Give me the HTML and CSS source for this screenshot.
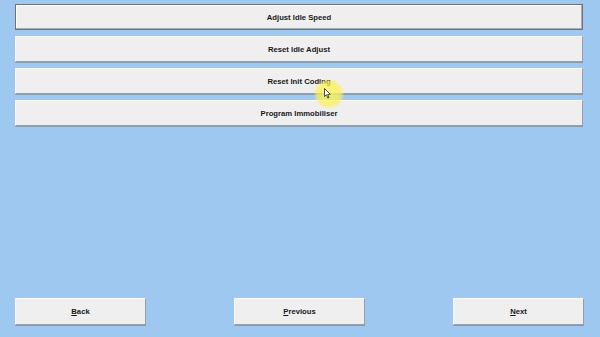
FILE: index.html
```html
<!DOCTYPE html>
<html lang="en">
<head>
  <meta charset="utf-8">
  <title>Functions</title>
  <link rel="stylesheet" href="styles.css">
</head>
<body>
<div class="screen">
  <div class="menu">
    <button class="btn focused">Adjust Idle Speed</button>
    <button class="btn">Reset Idle Adjust</button>
    <button class="btn">Reset Init Coding</button>
    <button class="btn">Program Immobiliser</button>
  </div>
  <div class="nav">
    <button class="btn small"><u>B</u>ack</button>
    <button class="btn small"><u>P</u>revious</button>
    <button class="btn small"><u>N</u>ext</button>
  </div>
</div>
<div class="cursor-glow">
  <svg class="pointer" width="7" height="11" viewBox="0 0 7 11">
    <path d="M0.5 0.5 L0.5 8.5 L2.4 6.8 L3.8 10 L5 9.5 L3.7 6.4 L6.3 6.3 Z" fill="#fff" stroke="#222" stroke-width="0.8"/>
  </svg>
</div>
</body>
</html>
```

FILE: styles.css
```css
* {
  margin: 0;
  padding: 0;
  box-sizing: border-box;
}

html, body {
  width: 100%;
  height: 100%;
  overflow: hidden;
}

body {
  background-color: #9fc8f0;
  font-family: "Liberation Sans", Arial, sans-serif;
}

.screen {
  height: 100%;
  display: flex;
  flex-direction: column;
  padding: 4px 16px 12px 15px;
}

.menu {
  display: flex;
  flex-direction: column;
  gap: 6px;
  margin-right: 1px;
}

.btn {
  height: 26px;
  background-color: #efefef;
  border: 1px solid;
  border-color: #fafafa #9a9ea4 #9a9ea4 #fafafa;
  box-shadow: 0 1px 0 #8f9aa8;
  font-family: inherit;
  font-size: 7.7px;
  font-weight: bold;
  color: #1a1a1a;
  text-align: center;
}

.btn.focused {
  border: 1px solid #6f737a;
  box-shadow: inset -1px -1px 0 #a8acb2, inset 1px 1px 0 #fff;
}

.nav {
  margin-top: auto;
  display: flex;
  justify-content: space-between;
}

.btn.small {
  width: 131px;
  height: 27px;
}

.btn u {
  text-decoration: underline;
}

.cursor-glow {
  position: absolute;
  left: 314px;
  top: 79px;
  width: 30px;
  height: 30px;
  border-radius: 50%;
  background: radial-gradient(circle, rgba(255, 245, 90, 0.85) 0%, rgba(255, 240, 80, 0.7) 55%, rgba(255, 240, 80, 0) 75%);
}

.pointer {
  position: absolute;
  left: 10px;
  top: 9px;
}
```
